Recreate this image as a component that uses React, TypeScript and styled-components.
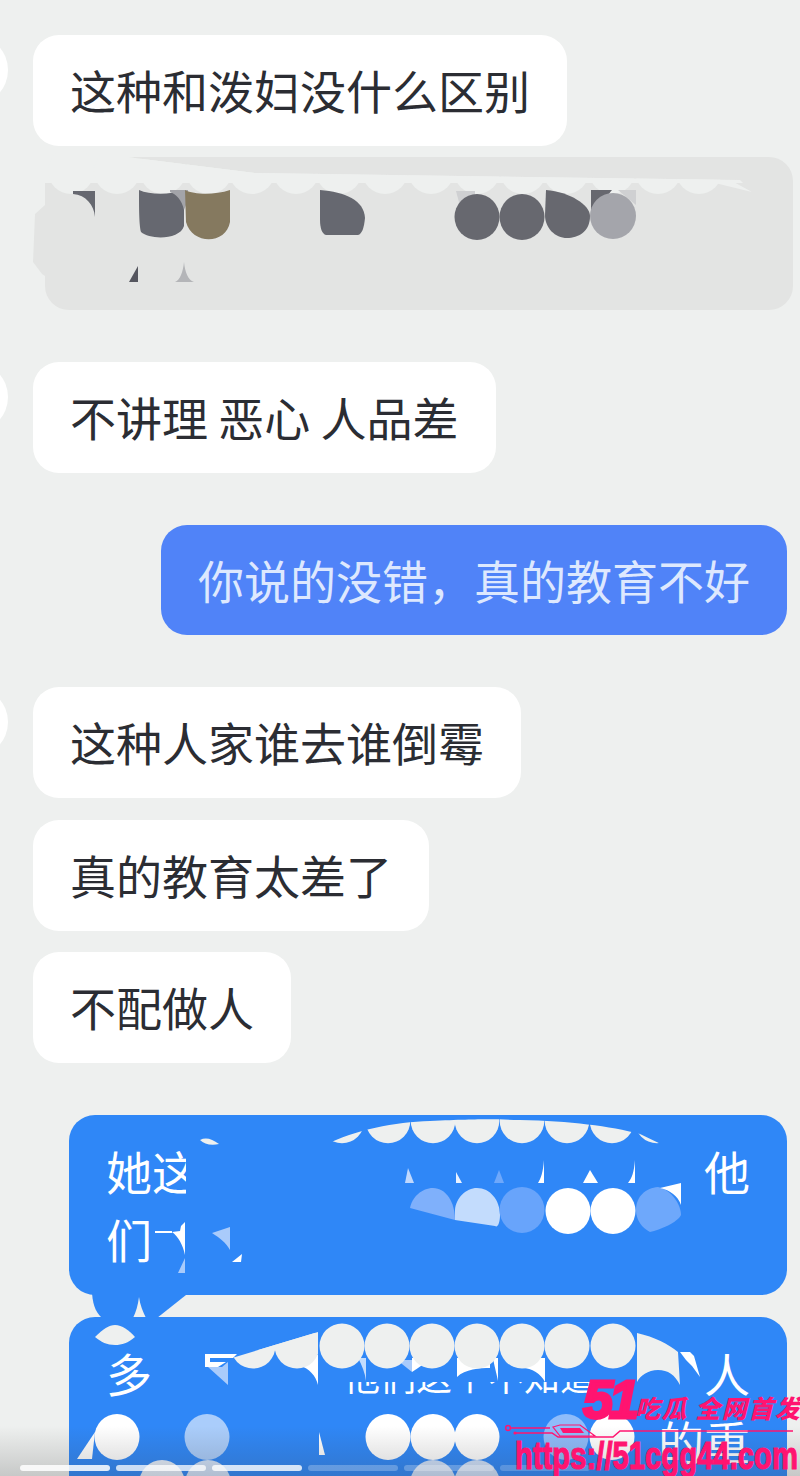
import React from "react";
import styled, { createGlobalStyle } from "styled-components";

const PAGE_BG = "#eef0ef";
const BLUE = "#2f87f7";
const PINK = "#ff1470";

const GlobalStyle = createGlobalStyle`
  html, body {
    margin: 0;
    padding: 0;
    background: ${PAGE_BG};
  }
`;

const scallops = (xs: number[], cy: number, r: number, fill: string) =>
  xs.map((x) => <circle key={x} cx={x} cy={cy} r={r} fill={fill} />);

const blobs = (items: [number, string][], cy: number) =>
  items.map(([x, fill]) => (
    <ellipse key={x} cx={x} cy={cy} rx={22.5} ry={23} fill={fill} />
  ));

const GreyMask = () => (
  <Mask viewBox="45 157 748 153" width={748} height={153}>
    <defs>
      <clipPath id="grey-top">
        <path d="M30 150H71L255 173L740 180L760 200H30Z" />
      </clipPath>
    </defs>
    <path d="M45 205L35 214L33 262L42 274L45 276Z" fill="#e3e4e3" />
    <g clipPath="url(#grey-top)">
      <path d="M30 150H800V183H30Z" fill={PAGE_BG} />
      {scallops([71, 117, 163, 209, 252, 296, 339, 385, 431, 477, 523, 566, 612, 658, 699], 171, 23, PAGE_BG)}
      <path d="M715 183L730 180L752 192Z" fill={PAGE_BG} />
    </g>
    <path d="M73 191H95V217C94 205 86 195 73 194Z" fill="#666870" />
    <path d="M139 190C150 195 170 195 184 190V226C180 240 150 240 141 232C139 225 139 205 139 190Z" fill="#666870" />
    <path d="M170 190H188V200L184 210C182 200 176 194 170 192Z" fill="#a3a4a9" />
    <path d="M185 190C195 195 215 195 230 190V222C226 245 192 245 186 222Z" fill="#85795f" />
    <path d="M320 190C345 192 364 200 365 218C364 228 362 234 358 235H326C322 234 320 228 320 220Z" fill="#666870" />
    <path d="M456 191H475V196L460 206Z" fill="#cfd0d2" />
    {blobs([[477, "#67686f"], [522, "#67686f"]], 217)}
    <path d="M546 190C570 192 590 205 590 216C590 232 578 238 567 238C555 238 545 228 545 215Z" fill="#67686f" />
    <path d="M591 190H612L596 210H591Z" fill="#67686f" />
    <path d="M618 190H636V205L625 196Z" fill="#cfd0d2" />
    <ellipse cx={613} cy={216} rx={23} ry={23} fill="#a4a5ab" />
    <path d="M129 282L138 266V282Z" fill="#55565f" />
    <path d="M175 282C180 280 183 272 184 262C185 272 188 280 194 282Z" fill="#b4b5b8" />
  </Mask>
);

const FirstBlueMask = () => (
  <Mask viewBox="69 1115 718 180" width={718} height={180}>
    <defs>
      <clipPath id="first-top">
        <path d="M325 1145C355 1130 395 1122 430 1121C480 1119 490 1119 520 1120C570 1121 610 1126 640 1134L665 1146Z" />
      </clipPath>
    </defs>
    <rect x={186} y={1135} width={150} height={145} fill={BLUE} />
    <path d="M200 1140C206 1137 212 1139 219 1144C211 1146 204 1144 200 1140Z" fill={PAGE_BG} />
    <g clipPath="url(#first-top)">
      {scallops([342, 388, 433, 477, 522, 567, 612, 657], 1121, 22.3, PAGE_BG)}
    </g>
    <path d="M405 1183L408 1168L414 1183Z" fill="#c0d8fd" />
    <path d="M456 1183V1172L462 1183Z" fill="#eaf2ff" />
    <path d="M494 1183L499 1170L504 1183Z" fill="#6ea8fb" />
    <path d="M538 1183C541 1178 543 1172 544 1160V1183Z" fill="#fff" />
    <path d="M583 1183L590 1170L598 1183Z" fill="#fff" />
    <path d="M628 1183C632 1178 634 1172 635 1160V1183Z" fill="#fff" />
    <path d="M410 1208C412 1197 422 1188 433 1188C446 1188 455 1202 455 1220Z" fill="#7fb0fb" />
    <path d="M455 1210C456 1198 466 1188 477 1188C490 1188 500 1200 500 1215C500 1222 498 1228 495 1226L455 1220Z" fill="#c3dcfd" />
    <ellipse cx={522} cy={1210} rx={22.5} ry={23} fill="#68a4fb" />
    <ellipse cx={568} cy={1211} rx={22.5} ry={23} fill="#fff" />
    <ellipse cx={613} cy={1211} rx={22.5} ry={23} fill="#fff" />
    <path d="M636 1210C636 1196 646 1188 658 1187C672 1190 681 1205 681 1215C678 1222 660 1230 650 1232C642 1228 636 1220 636 1210Z" fill="#6ea8fb" />
    <path d="M660 1188L681 1183V1205C678 1196 670 1190 660 1188Z" fill="#fff" />
    <path d="M155 1231H172V1233H155Z" fill="#fff" />
    <path d="M172 1232C178 1236 183 1245 185 1255V1222L181 1226L180 1231Z" fill="#fff" />
    <path d="M178 1273L185 1258V1273Z" fill="#a9cbfb" />
    <path d="M212 1233L230 1227V1250C226 1243 220 1238 212 1233Z" fill="#a9cbfb" />
    <path d="M232 1262L242 1254L241 1262Z" fill="#fff" />
    <path d="M92 1290C92 1302 95 1312 102 1318H157L186 1295V1290Z" fill={BLUE} />
    <path d="M133 1318C136 1312 138 1305 139 1297C140 1305 143 1312 146 1318Z" fill={PAGE_BG} />
  </Mask>
);

const SecondBlueMask = () => (
  <Mask viewBox="69 1317 718 159" width={718} height={159}>
    <defs>
      <clipPath id="second-left">
        <path d="M232 1358L318 1332V1375H232Z" />
      </clipPath>
    </defs>
    <path d="M95 1337C103 1329 109 1325 115 1325C122 1325 129 1330 135 1337C128 1343 122 1345 115 1345C107 1345 101 1342 95 1337Z" fill={PAGE_BG} />
    <rect x={238} y={1338} width={462} height={44} fill={BLUE} />
    <path d="M205 1354H237L233 1358H210V1362H226L218 1367H205Z" fill="#fff" />
    <path d="M208 1367H222L228 1362V1385Z" fill="#a9cbfb" />
    <path d="M300 1366C309 1368 316 1376 318 1385V1355H300Z" fill="#fff" />
    <path d="M358 1358C362 1365 365 1373 366 1381V1358Z" fill="#c3dcfd" />
    <path d="M397 1360L412 1360L412 1372Z" fill="#a9cbfb" />
    <path d="M412 1372C418 1368 424 1364 432 1358H412Z" fill="#fff" />
    <path d="M457 1377V1358H490V1368C480 1368 465 1369 457 1377Z" fill="#fff" />
    <path d="M493 1358H498V1381C497 1375 495 1369 493 1358Z" fill="#fff" />
    <path d="M522 1368C532 1368 541 1374 545 1382V1358H522Z" fill="#fff" />
    <g clipPath="url(#second-left)">
      <rect x={232} y={1330} width={86} height={20} fill={PAGE_BG} />
      {scallops([253, 297], 1346, 22.5, PAGE_BG)}
    </g>
    {scallops([342, 387, 432, 477, 522, 567, 613], 1346, 22.5, PAGE_BG)}
    <path d="M637 1333C655 1337 668 1344 678 1352L680 1385C675 1375 668 1370 658 1370C648 1370 640 1376 637 1382Z" fill={PAGE_BG} />
    <path d="M680 1352L690 1352L694 1356L700 1377L692 1366L686 1360Z" fill="#fff" />
    {blobs([[117, "#fff"], [207, "#aacdfb"], [388, "#fff"], [433, "#fff"], [477, "#fff"], [566, "#8fbcfa"], [612, "#fff"]], 1437)}
    <path d="M77 1459L95 1432L92 1459Z" fill="#fff" />
    <path d="M319 1432L325 1455H319Z" fill="#fff" />
    <ellipse cx={162} cy={1484} rx={23} ry={24} fill="#e4eefc" />
    <ellipse cx={208} cy={1484} rx={23} ry={24} fill="#d2e3fb" />
    <ellipse cx={433} cy={1484} rx={23} ry={24} fill="#cfe1fb" />
    <ellipse cx={477} cy={1484} rx={23} ry={24} fill="#cfe1fb" />
  </Mask>
);

export default function App() {
  return (
    <Page>
      <GlobalStyle />
      <Row>
        <Avatar />
        <Bubble>这种和泼妇没什么区别</Bubble>
      </Row>
      <Row $top={11}>
        <GreyBubble>
          <GreyMask />
        </GreyBubble>
      </Row>
      <Row $top={52}>
        <Avatar />
        <Bubble>不讲理 恶心 人品差</Bubble>
      </Row>
      <Row $top={52} $mine>
        <Bubble $mine>你说的没错，真的教育不好</Bubble>
      </Row>
      <Row $top={52}>
        <Avatar />
        <Bubble>这种人家谁去谁倒霉</Bubble>
      </Row>
      <Row $top={22}>
        <Gutter />
        <Bubble>真的教育太差了</Bubble>
      </Row>
      <Row $top={21}>
        <Gutter />
        <Bubble>不配做人</Bubble>
      </Row>
      <Row $top={52} $mine>
        <BlueCard $height={180}>
          <CardLine $top={21}>
            <span>她这</span>
            <span>他</span>
          </CardLine>
          <CardLine $top={0}>
            <span>们</span>
          </CardLine>
          <FirstBlueMask />
        </BlueCard>
      </Row>
      <Row $top={22} $mine>
        <BlueCard $height={200}>
          <CardLine $top={21}>
            <span>多</span>
            <HiddenText>他们这个不知道</HiddenText>
            <span>人</span>
          </CardLine>
          <CardLine $top={0} $end>
            <span>的重</span>
          </CardLine>
          <SecondBlueMask />
        </BlueCard>
      </Row>
      <BottomShade />
      <StoryBars>
        <StoryBar $level={0.85} />
        <StoryBar $level={0.75} />
        <StoryBar $level={0.8} />
        <StoryBar $level={0.25} />
        <StoryBar $level={0.25} />
        <StoryBar $level={0.2} />
      </StoryBars>
      <Watermark>
        <BrandLine>
          <BrandNumber>51</BrandNumber>
          <BrandText>吃瓜 全网首发</BrandText>
        </BrandLine>
        <Circuit viewBox="505 1422 295 16" width={295} height={16} fill="none">
          <circle cx={508} cy={1428} r={2.4} stroke={PINK} strokeWidth={1.5} />
          <circle cx={515} cy={1433} r={1.6} fill={PINK} />
          <path d="M510 1428H550M515 1433H552L558 1437H613L620 1431H793" stroke={PINK} strokeWidth={1.5} />
          <path d="M553 1427L560 1425H580L595 1436H560Z" stroke={PINK} strokeWidth={1.2} />
          <path d="M560 1428H580L584 1433H563Z" fill={PINK} />
        </Circuit>
        <UrlText>https://51cgg44.com</UrlText>
      </Watermark>
    </Page>
  );
}

const Page = styled.div`
  position: relative;
  display: flex;
  flex-direction: column;
  width: 800px;
  height: 1476px;
  padding: 35px 13px 0 0;
  box-sizing: border-box;
  overflow: hidden;
  background: ${PAGE_BG};
  font-family: "Noto Sans CJK SC", "Liberation Sans", sans-serif;
`;

const Row = styled.div<{ $top?: number; $mine?: boolean }>`
  display: flex;
  flex-shrink: 0;
  justify-content: ${(p) => (p.$mine ? "flex-end" : "flex-start")};
  margin-top: ${(p) => p.$top ?? 0}px;
`;

const Gutter = styled.div`
  flex: 0 0 33px;
`;

const Avatar = styled(Gutter)`
  height: 70px;
  overflow: hidden;
  &::before {
    content: "";
    display: block;
    width: 70px;
    height: 70px;
    margin-left: -62px;
    border-radius: 50%;
    background: #fff;
  }
`;

const Bubble = styled.div<{ $mine?: boolean }>`
  display: flex;
  align-items: center;
  height: ${(p) => (p.$mine ? 110 : 111)}px;
  padding: 0 37px 3px;
  box-sizing: border-box;
  border-radius: 26px;
  background: ${(p) => (p.$mine ? "#5083f8" : "#fff")};
  color: ${(p) => (p.$mine ? "#dde8fe" : "#2b2d33")};
  font-size: 46px;
  white-space: pre;
`;

const GreyBubble = styled.div`
  position: relative;
  width: 748px;
  height: 153px;
  margin-left: 45px;
  margin-right: -6px;
  border-radius: 24px;
  background: #e3e4e3;
`;

const BlueCard = styled.div<{ $height: number }>`
  position: relative;
  display: flex;
  flex-direction: column;
  width: 718px;
  height: ${(p) => p.$height}px;
  padding: 0 37px;
  box-sizing: border-box;
  border-radius: 26px;
  background: ${BLUE};
  color: #fff;
  font-size: 46px;
`;

const CardLine = styled.div<{ $top: number; $end?: boolean }>`
  display: flex;
  justify-content: ${(p) => (p.$end ? "flex-end" : "space-between")};
  align-items: flex-end;
  height: 68px;
  margin-top: ${(p) => p.$top}px;
  line-height: 68px;
`;

const HiddenText = styled.span`
  margin: 0 auto 9px 192px;
  font-size: 36px;
  line-height: 44px;
`;

const Mask = styled.svg`
  position: absolute;
  top: 0;
  left: 0;
  overflow: visible;
`;

const BottomShade = styled.div`
  position: absolute;
  left: 0;
  right: 0;
  bottom: 0;
  height: 50px;
  background: linear-gradient(180deg, rgba(60, 60, 60, 0), rgba(60, 60, 60, 0.22));
`;

const StoryBars = styled.div`
  position: absolute;
  left: 20px;
  right: 20px;
  bottom: 5px;
  display: flex;
  gap: 6px;
`;

const StoryBar = styled.div<{ $level: number }>`
  flex: 0 0 90px;
  height: 6px;
  border-radius: 3px;
  background: rgba(255, 255, 255, ${(p) => p.$level});
`;

const Watermark = styled.div`
  position: absolute;
  left: 505px;
  top: 1378px;
  width: 295px;
  display: flex;
  flex-direction: column;
  color: ${PINK};
  font-weight: 700;
`;

const BrandLine = styled.div`
  display: flex;
  align-items: flex-end;
  height: 44px;
  padding-left: 78px;
`;

const BrandNumber = styled.span`
  font-family: "Liberation Sans", sans-serif;
  font-size: 54px;
  font-style: italic;
  font-weight: 700;
  line-height: 46px;
  letter-spacing: -4px;
  -webkit-text-stroke: 3px ${PINK};
`;

const BrandText = styled.span`
  font-family: "Noto Sans CJK SC", sans-serif;
  font-size: 25px;
  font-style: italic;
  font-weight: 900;
  line-height: 30px;
  letter-spacing: 1.5px;
  white-space: pre;
`;

const Circuit = styled.svg`
  display: block;
`;

const UrlText = styled.div`
  width: 365px;
  margin-top: -2px;
  padding-left: 13px;
  font-family: "Liberation Sans", sans-serif;
  font-size: 38px;
  line-height: 40px;
  white-space: nowrap;
  -webkit-text-stroke: 1.2px ${PINK};
  transform: scaleX(0.77);
  transform-origin: left center;
`;
